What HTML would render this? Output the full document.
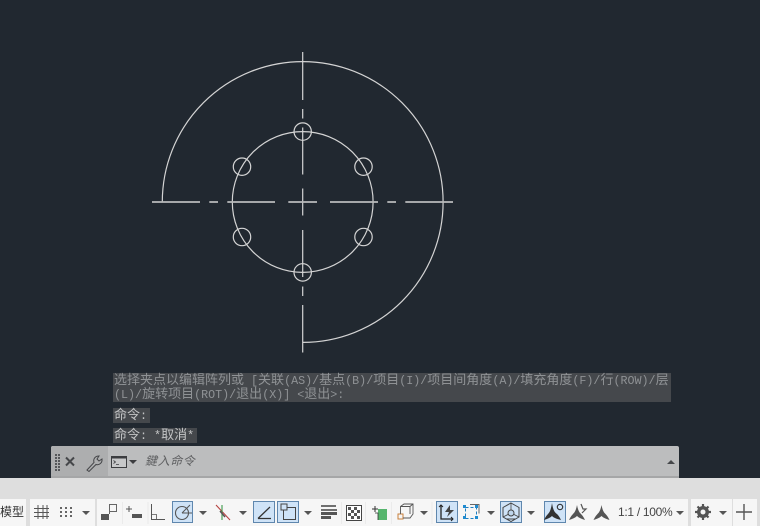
<!DOCTYPE html>
<html><head><meta charset="utf-8"><style>
html,body{margin:0;padding:0;background:#212830}
#w{position:relative;width:760px;height:526px;overflow:hidden;background:#212830;font-family:"Liberation Sans","Noto Sans CJK SC",sans-serif}
.h{position:absolute;left:113px;background:#45484c}
.t{position:absolute;left:114px;font:11.700px/14px "Liberation Mono","Noto Sans CJK SC",monospace;color:#8f9295;white-space:pre;letter-spacing:0}
.t b{font-weight:normal;font-size:13px}
svg{position:absolute;left:0;top:0}
</style></head><body><div id="w">
<svg width="760" height="526" viewBox="0 0 760 526" fill="none">
<g stroke="#d4d4d4" stroke-width="1.200">
<path d="M162.300 202A140.400 140.400 0 1 1 302.700 342.400"/>
<circle cx="302.700" cy="202" r="70.400"/>
<circle cx="302.700" cy="131.600" r="8.700"/><circle cx="302.700" cy="272.400" r="8.700"/>
<circle cx="242" cy="166.700" r="8.700"/><circle cx="363.500" cy="166.700" r="8.700"/>
<circle cx="242" cy="237" r="8.700"/><circle cx="363.500" cy="237" r="8.700"/>
<path d="M302.700 52V100M302.700 109V118.500M302.700 127.500V174.500M302.700 188.500V215.500M302.700 230V277M302.700 286.500V296M302.700 305V352.500"/>
</g>
<path d="M152 202H200M209.300 202H218M227.300 202H275M288.300 202H317M330 202H378M387.300 202H396M405.300 202H453" stroke="#b9babb" stroke-width="1.700"/>
</svg>

<div class="h" style="top:373px;width:558px;height:29px"></div>
<div class="h" style="top:408px;width:37px;height:15px"></div>
<div class="h" style="top:428px;width:84px;height:15px"></div>
<div class="t" style="top:374px"><b>选择夹点以编辑阵列或</b> [<b>关联</b>(AS)/<b>基点</b>(B)/<b>项目</b>(I)/<b>项目间角度</b>(A)/<b>填充角度</b>(F)/<b>行</b>(ROW)/<b>层</b></div>
<div class="t" style="top:388px">(L)/<b>旋转项目</b>(ROT)/<b>退出</b>(X)] &lt;<b>退出</b>&gt;:</div>
<div class="t" style="top:408.500px;color:#c4c5c6"><b>命令</b>:</div>
<div class="t" style="top:428.500px;color:#c4c5c6"><b>命令</b>: *<b>取消</b>*</div>

<div style="position:absolute;left:51px;top:446px;width:628px;height:31px;background:#bcbdbe;border-radius:2px 2px 0 0"></div>
<div style="position:absolute;left:51px;top:446px;width:57px;height:31px;background:#adaeaf;border-radius:2px 0 0 0"></div>
<div style="position:absolute;left:51px;top:476px;width:628px;height:2px;background:#a5a6a7"></div>
<div style="position:absolute;left:145px;top:453px;font:italic 12px/16px 'Liberation Sans','Noto Sans CJK SC',sans-serif;color:#5f6062;letter-spacing:.6px">鍵入命令</div>

<div style="position:absolute;left:0;top:478px;width:760px;height:48px;background:#dedede"></div>
<div style="position:absolute;left:0;top:499px;width:26px;height:27px;background:#f6f6f6"></div>
<div style="position:absolute;left:30px;top:499px;width:65px;height:27px;background:#f6f6f6"></div>
<div style="position:absolute;left:97px;top:499px;width:591px;height:27px;background:#f6f6f6"></div>
<div style="position:absolute;left:691px;top:499px;width:41px;height:27px;background:#f6f6f6"></div>
<div style="position:absolute;left:733px;top:499px;width:24px;height:27px;background:#f6f6f6"></div>
<div style="position:absolute;left:0;top:504px;font:12px/16px 'Liberation Sans','Noto Sans CJK SC',sans-serif;color:#333;white-space:nowrap">模型</div>
<div style="position:absolute;left:618px;top:504px;font:12px/16px 'Liberation Sans',sans-serif;color:#444;letter-spacing:-.3px;white-space:nowrap">1:1 / 100%</div>

<svg width="760" height="526" viewBox="0 0 760 526" fill="none">
<g fill="#55575a"><rect x="55" y="454" width="2" height="2"/><rect x="58" y="454" width="2" height="2"/><rect x="55" y="457" width="2" height="2"/><rect x="58" y="457" width="2" height="2"/><rect x="55" y="460" width="2" height="2"/><rect x="58" y="460" width="2" height="2"/><rect x="55" y="463" width="2" height="2"/><rect x="58" y="463" width="2" height="2"/><rect x="55" y="466" width="2" height="2"/><rect x="58" y="466" width="2" height="2"/><rect x="55" y="469" width="2" height="2"/><rect x="58" y="469" width="2" height="2"/></g>
<path d="M66 457.500L74 465.500M74 457.500L66 465.500" stroke="#45474a" stroke-width="2"/>
<path d="M87 470L94 462.500C93 459 95 456 99 456L97 459L99 461L102 459C102.500 463 99 465.500 96 464.500L89 471.500Z" stroke="#454649" stroke-width="1"/>
<rect x="111.500" y="456.500" width="15" height="11" stroke="#3c3d40" fill="#c7c8c9"/><rect x="111" y="456" width="16" height="2.500" fill="#3c3d40"/>
<path d="M113.500 460.500L115.500 462L113.500 463.500M116 464.500H119" stroke="#3c3d40" stroke-width=".8"/>
<path d="M129 460H137L133 464Z" fill="#3c3d40"/>
<path d="M667 464L671 460L675 464Z" fill="#45474a"/>
<g fill="#cfe3f7" stroke="#5f87ae"><rect x="172.500" y="501.500" width="20" height="21"/><rect x="253.500" y="501.500" width="21" height="21"/><rect x="277.500" y="501.500" width="21" height="21"/><rect x="436.500" y="501.500" width="21" height="21"/><rect x="500.500" y="501.500" width="21" height="21"/><rect x="544.500" y="501.500" width="21" height="21"/></g>
<path d="M122.500 502V524M148 502V524M341.500 502V524M365.500 502V524M391.500 502V524M432 502V524" stroke="#ebebeb"/>
<path d="M38 505V519M43 505V519M47 505V519M34 508.500H49M34 512.500H49M34 516.500H49" stroke="#555" stroke-width="1"/>
<g fill="#666"><rect x="60" y="507" width="2" height="2"/><rect x="65" y="507" width="2" height="2"/><rect x="70" y="507" width="2" height="2"/><rect x="60" y="511" width="2" height="2"/><rect x="65" y="511" width="2" height="2"/><rect x="70" y="511" width="2" height="2"/><rect x="60" y="515" width="2" height="2"/><rect x="65" y="515" width="2" height="2"/><rect x="70" y="515" width="2" height="2"/></g>
<g fill="#555"><path d="M82 511H90L86 515Z"/><path d="M199 511H207L203 515Z"/><path d="M239 511H247L243 515Z"/><path d="M304 511H312L308 515Z"/><path d="M420 511H428L424 515Z"/><path d="M487 511H495L491 515Z"/><path d="M527 511H535L531 515Z"/><path d="M676 511H684L680 515Z"/><path d="M719 511H727L723 515Z"/></g>
<rect x="101" y="514" width="8" height="6" fill="#555"/><path d="M109.500 514V504.500H116.500V511.500H109.500" stroke="#666"/>
<path d="M129 506V512M126 509H132" stroke="#555"/><rect x="132" y="514" width="10" height="4" fill="#555"/>
<path d="M151.500 504V519.500H165" stroke="#555"/><path d="M151.500 514.500H156.500V519.500" stroke="#555" stroke-width=".8"/>
<circle cx="182" cy="513" r="6.500" stroke="#555" stroke-width="1.100"/><path d="M182 513H192M182 513L190 505" stroke="#555"/>
<path d="M216 505L230 520" stroke="#b6423f" stroke-width="1.100"/><path d="M222 505V520" stroke="#3d9a4a" stroke-width="1.100"/><path d="M220 511L225 517" stroke="#555" stroke-width="1.500"/>
<path d="M258 518.500H271M258 518.500L270 507" stroke="#333" stroke-width="1.300"/>
<rect x="283.500" y="507.500" width="12" height="12" stroke="#444"/><rect x="281" y="504" width="6" height="6" fill="#cfe3f7" stroke="#444"/>
<path d="M321 506H336M321 510H337" stroke="#444" stroke-width="1.500"/><rect x="321" y="512" width="16" height="3" fill="#555"/><rect x="321" y="516" width="10" height="3" fill="#555"/>
<rect x="346.500" y="505.500" width="15" height="15" stroke="#444" fill="#fff"/>
<g fill="#555"><rect x="348" y="507" width="3" height="3"/><rect x="354" y="507" width="3" height="3"/><rect x="351" y="510" width="3" height="3"/><rect x="357" y="510" width="3" height="3"/><rect x="348" y="513" width="3" height="3"/><rect x="354" y="513" width="3" height="3"/><rect x="351" y="516" width="3" height="3"/><rect x="357" y="516" width="3" height="3"/></g>
<path d="M375 506V512M372 509H378" stroke="#333"/><rect x="378" y="509" width="9" height="11" fill="#56b56d"/><path d="M375 513H378V520" stroke="#333" stroke-width=".8"/>
<rect x="398" y="514" width="5" height="5" stroke="#c8803c"/><path d="M400.500 514V506.500L404 504H413V514L410 518H403M400.500 506.500H410V514M410 506.500L413 504" stroke="#555" stroke-width=".9"/>
<path d="M441 505V519H453" stroke="#222" stroke-width="1.300"/><path d="M439 507L441 505L443 507M451 517L453 519L451 521" stroke="#222"/><path d="M450 505L445 512H449L447 517L454 510H450Z" fill="#444"/>
<rect x="465.500" y="507.500" width="11" height="11" stroke="#1f7fc0" stroke-dasharray="3 2"/><path d="M470 504.500H479V513.500" stroke="#666"/><g fill="#1f8bd0"><rect x="463" y="505" width="3" height="3"/><rect x="475" y="505" width="3" height="3"/><rect x="463" y="516" width="3" height="3"/><rect x="475" y="516" width="3" height="3"/></g>
<path d="M511 503L519 507.500V517L511 521.500L503 517V507.500Z" stroke="#444"/><path d="M511 503V513M503 517L511 513L519 517" stroke="#444" stroke-width=".8"/><circle cx="511" cy="513" r="3" fill="#bfd6ec" stroke="#444"/><path d="M507 519H515" stroke="#444"/>
<path d="M552 503C553 509 554 512 557 514C559 516 560 518 561 520C557 519 554 518 552 516C550 518 547 519 544 520C545 518 546 516 548 514C550 512 551 509 552 503Z" fill="#333"/><circle cx="560" cy="507" r="2.700" stroke="#333" stroke-width="1.100"/>
<path d="M577 505C578 510 579 512 581 514C583 516 584 518 585 520C582 519 579 518 577 516C575 518 572 519 569 520C570 518 571 516 573 514C575 512 576 510 577 505Z" fill="#555"/><path d="M581 504L583 509H586L582 513" stroke="#555" stroke-width="1.200"/>
<path d="M601.500 505C602.500 510 603.500 512 605.500 514C607.500 516 608.500 518 609.500 520C606.500 519 603.500 518 601.500 516C599.500 518 596.500 519 593.500 520C594.500 518 595.500 516 597.500 514C599.500 512 600.500 510 601.500 505Z" fill="#555"/>
<circle cx="703" cy="512" r="4.500" stroke="#555" stroke-width="3"/><path d="M703 504V520M695 512H711M697.500 506.500L708.500 517.500M708.500 506.500L697.500 517.500" stroke="#555" stroke-width="2.200"/><circle cx="703" cy="512" r="2.500" fill="#f6f6f6"/>
<path d="M744 504V520M736 512H752" stroke="#555" stroke-width="1.400"/>
</svg>
</div></body></html>
